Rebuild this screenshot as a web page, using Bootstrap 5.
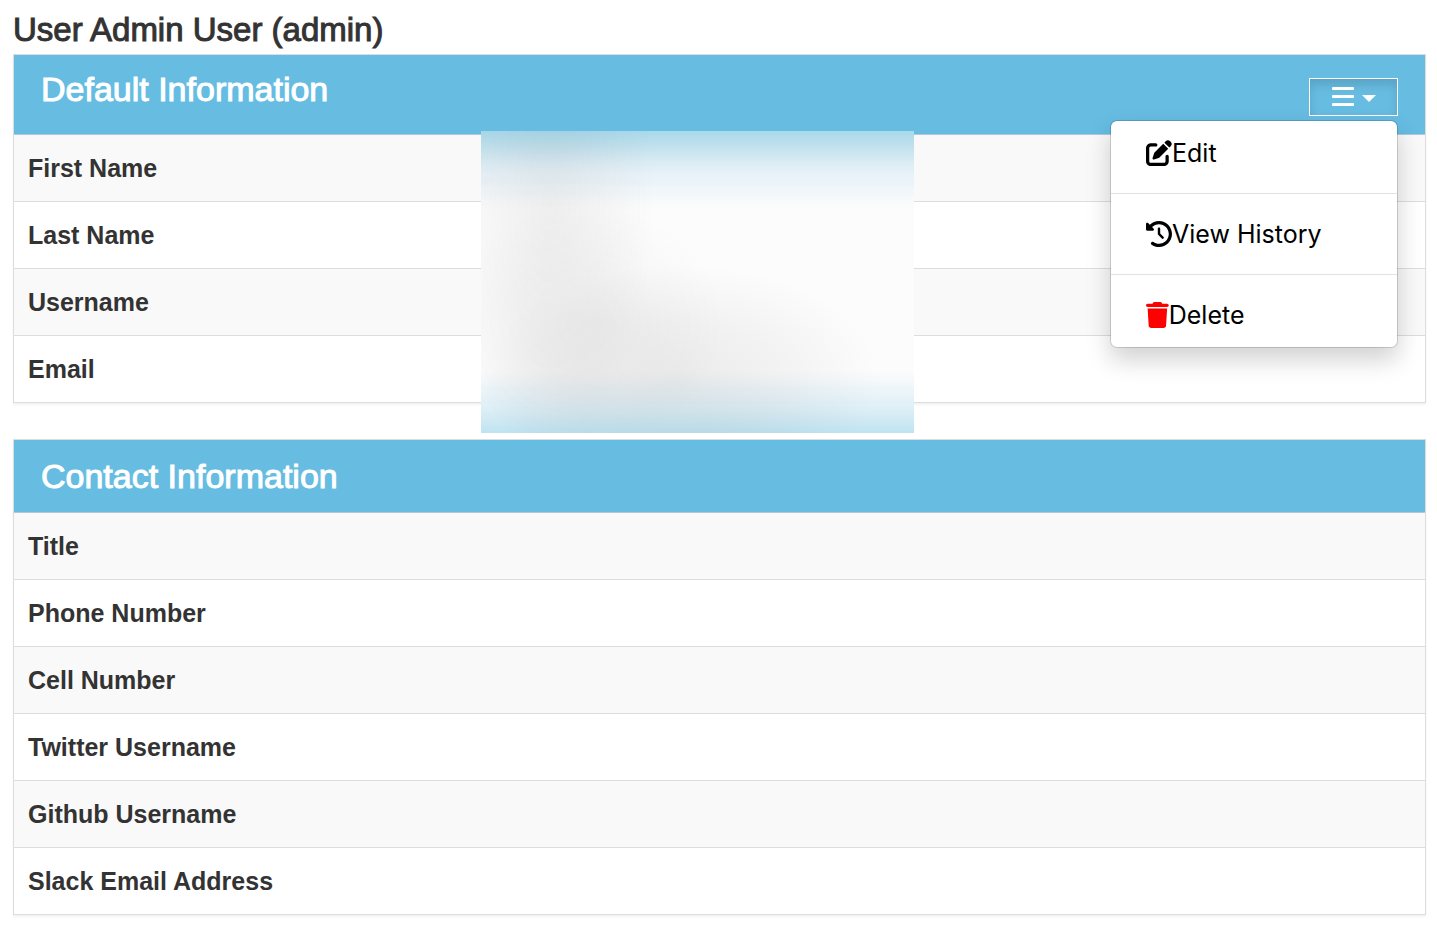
<!DOCTYPE html>
<html lang="en">
<head>
<meta charset="utf-8">
<meta name="viewport" content="width=device-width, initial-scale=1">
<title>User Admin User (admin)</title>
<link rel="stylesheet" href="https://cdn.jsdelivr.net/npm/bootstrap@5.3.0/dist/css/bootstrap.min.css">
<style>
  body {
    font-family: "Liberation Sans", Arial, sans-serif;
    color: #333;
    padding: 8px 11px 20px 13px;
  }
  .page-title, .panel-title {
    font-weight: 400;
    line-height: 44px;
    -webkit-text-stroke: 1px currentColor;
  }
  .page-title { font-size: 33px; margin-bottom: 2px; }
  .panel-title { font-size: 34px; }
  .panel {
    --bs-card-border-color: #ddd;
    --bs-card-border-radius: 0;
    box-shadow: 0 2px 2px rgba(0, 0, 0, .05);
  }
  .panel + .panel { margin-top: 36px; }
  .panel-head {
    background: #67bce2;
    color: #fff;
    border-bottom: 1px solid #b4c6d8;
    padding: 14px 27px;
  }
  .panel-head-menu { padding: 12px 27px; min-height: 80px; }
  .info-table {
    --bs-table-color: #333;
    --bs-table-striped-color: #333;
    --bs-table-striped-bg: #f9f9f9;
    --bs-table-border-color: #ddd;
    font-size: 25px;
    line-height: 38px;
  }
  .info-table > tbody > tr > * { padding: 14px; border-color: #ddd; }
  .info-table th { width: 33%; }
  .info-table tr:last-child > * { border-bottom: 0; }
  .menu-btn {
    --bs-btn-border-radius: 0;
    width: 89px;
    height: 38px;
    margin-top: 11px;
    border: 1px solid #fff;
    background: #67bce2;
    box-shadow: inset 0 6px 10px rgba(0, 0, 0, .13);
  }
  .menu-btn::after { border-width: 7px 7px 0; margin: 3px 0 0; }
  .action-menu.show {
    top: 53px;
    right: 0;
    width: 288px;
    padding: 0;
    background-clip: padding-box;
    border: 1px solid rgba(0, 0, 0, .15);
    border-radius: 7px;
    box-shadow: 0 12px 24px rgba(0, 0, 0, .18);
    font: 25px/40px Inter, "Liberation Sans", sans-serif;
  }
  .action-menu .dropdown-item { color: #000; padding: 12px 35px; }
  .action-menu .dropdown-divider { margin: 8px 0; border-color: #e2e2e2; opacity: 1; }
  .action-menu svg { height: 26px; display: block; }
  .trash { color: #f00; }
  .veil {
    top: -4px;
    bottom: -31px;
    left: 33.1%;
    width: 30.7%;
    background:
      linear-gradient(to bottom, #a9d9ec 0, #bbdfec 12px, #dcecf5 32px, #e6f1f7 42px, rgba(252, 253, 253, 0) 78px),
      linear-gradient(to top, #bfe3f1 0, #dbeef6 22px, rgba(252, 254, 254, 0) 62px),
      #fcfcfc;
  }
  .veil::before {
    content: "";
    position: absolute;
    inset: 0;
    background:
      radial-gradient(ellipse 24% 85% at 16% 24%, rgba(70, 60, 60, .07), rgba(70, 60, 60, .04) 45%, transparent),
      radial-gradient(ellipse 32% 40% at 24% 64%, rgba(70, 60, 60, .05), rgba(70, 60, 60, .03) 45%, transparent),
      radial-gradient(ellipse 46% 38% at 46% 82%, rgba(70, 60, 60, .09), rgba(70, 60, 60, .05) 50%, transparent);
  }
</style>
</head>
<body>
<main>
  <h1 class="page-title">User Admin User (admin)</h1>

  <section class="card panel">
    <header class="panel-head panel-head-menu d-flex justify-content-between align-items-start">
      <h2 class="panel-title mb-0">Default Information</h2>
      <div class="dropdown">
        <button type="button" class="btn menu-btn text-white dropdown-toggle d-flex align-items-center justify-content-center gap-2 p-0" data-bs-toggle="dropdown" aria-expanded="true" aria-label="Actions">
          <svg width="22" height="21" viewBox="0 0 22 21" fill="currentColor" aria-hidden="true"><rect width="22" height="3" rx="1"/><rect width="22" height="3" y="8" rx="1"/><rect width="22" height="3" y="16" rx="1"/></svg>
        </button>
        <ul class="dropdown-menu action-menu show">
          <li><a class="dropdown-item d-flex align-items-center" href="#edit"><svg viewBox="0 0 512 512" fill="currentColor" aria-hidden="true"><path d="M471.600 21.700c-21.900-21.900-57.300-21.900-79.200 0L362.300 51.700l97.900 97.900 30.100-30.100c21.900-21.900 21.900-57.300 0-79.200L471.600 21.700zm-299.200 220c-6.100 6.100-10.800 13.600-13.500 21.900l-29.600 88.800c-2.900 8.600-.6 18.100 5.800 24.600s15.900 8.700 24.600 5.800l88.800-29.600c8.200-2.700 15.700-7.400 21.900-13.500L437.700 172.300 339.700 74.300 172.400 241.700zM96 64C43 64 0 107 0 160V416c0 53 43 96 96 96H352c53 0 96-43 96-96V320c0-17.700-14.300-32-32-32s-32 14.300-32 32v96c0 17.700-14.300 32-32 32H96c-17.700 0-32-14.300-32-32V160c0-17.700 14.300-32 32-32h96c17.700 0 32-14.300 32-32s-14.300-32-32-32H96z"/></svg>Edit</a></li>
          <li><hr class="dropdown-divider"></li>
          <li><a class="dropdown-item d-flex align-items-center" href="#history"><svg viewBox="0 0 512 512" fill="currentColor" aria-hidden="true"><path d="M75 75L41 41C25.900 25.900 0 36.600 0 57.900V168c0 13.300 10.700 24 24 24H134.100c21.400 0 32.100-25.900 17-41l-30.800-30.800C155 85.500 203 64 256 64c106 0 192 86 192 192s-86 192-192 192c-40.800 0-78.600-12.700-109.700-34.400c-14.500-10.100-34.400-6.600-44.600 7.900s-6.600 34.400 7.900 44.600C151.200 495 201.700 512 256 512c141.400 0 256-114.600 256-256S397.400 0 256 0C185.300 0 121.300 28.700 75 75zm181 53c-13.300 0-24 10.700-24 24V256c0 6.400 2.500 12.500 7 17l72 72c9.400 9.400 24.600 9.400 33.900 0s9.400-24.600 0-33.900l-65-65V152c0-13.300-10.700-24-24-24z"/></svg>View History</a></li>
          <li><hr class="dropdown-divider"></li>
          <li><a class="dropdown-item d-flex align-items-center" href="#delete"><svg class="trash" viewBox="0 0 448 512" fill="currentColor" aria-hidden="true"><path d="M135.200 17.700L128 32H32C14.300 32 0 46.300 0 64S14.300 96 32 96H416c17.700 0 32-14.300 32-32s-14.300-32-32-32H320l-7.200-14.300C307.400 6.800 296.300 0 284.200 0H163.800c-12.100 0-23.200 6.800-28.600 17.700zM416 128H32L53.200 467c1.600 25.300 22.600 45 47.900 45H346.900c25.300 0 46.300-19.700 47.900-45L416 128z"/></svg>Delete</a></li>
        </ul>
      </div>
    </header>
    <div class="position-relative">
      <table class="table table-striped info-table mb-0">
        <tbody>
          <tr><th scope="row">First Name</th><td></td></tr>
          <tr><th scope="row">Last Name</th><td></td></tr>
          <tr><th scope="row">Username</th><td></td></tr>
          <tr><th scope="row">Email</th><td></td></tr>
        </tbody>
      </table>
      <div class="veil position-absolute" aria-hidden="true"></div>
    </div>
  </section>

  <section class="card panel">
    <header class="panel-head">
      <h2 class="panel-title mb-0">Contact Information</h2>
    </header>
    <table class="table table-striped info-table mb-0">
      <tbody>
        <tr><th scope="row">Title</th><td></td></tr>
        <tr><th scope="row">Phone Number</th><td></td></tr>
        <tr><th scope="row">Cell Number</th><td></td></tr>
        <tr><th scope="row">Twitter Username</th><td></td></tr>
        <tr><th scope="row">Github Username</th><td></td></tr>
        <tr><th scope="row">Slack Email Address</th><td></td></tr>
      </tbody>
    </table>
  </section>
</main>
<script src="https://cdn.jsdelivr.net/npm/bootstrap@5.3.0/dist/js/bootstrap.bundle.min.js"></script>
</body>
</html>
